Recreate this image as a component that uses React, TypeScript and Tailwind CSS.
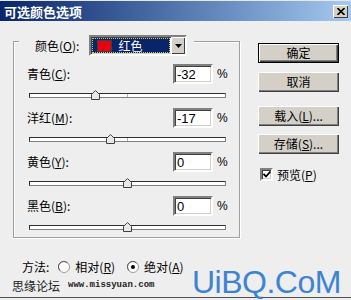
import React from 'react';

interface SliderRowProps {
  label: string;
  accel: string;
  value: number;
}

const sunken =
  'border-2 border-t-[#808080] border-l-[#808080] border-b-white border-r-white shadow-[inset_1px_1px_0_#404040,inset_-1px_-1px_0_#d4d0c8]';

const Label = ({ label, accel }: { label: string; accel: string }) => (
  <span>
    {label}(<span className="underline">{accel}</span>):
  </span>
);

const SliderRow = ({ label, accel, value }: SliderRowProps) => {
  const thumbLeft = 15 + (197 * (value + 100)) / 200 - 4.5;
  return (
    <div>
      <div className="flex items-center h-[20px] pl-[13px] pr-[13px]">
        <div className="flex-1">
          <Label label={label} accel={accel} />
        </div>
        <div
          className={`w-[40px] h-[20px] bg-white flex items-center pl-[2px] text-[13px] font-['Liberation_Sans',sans-serif] ${sunken}`}
        >
          {value}
        </div>
        <span className="ml-[4px] w-[9px] font-['Liberation_Sans',sans-serif] text-[12px]">%</span>
      </div>
      <div className="relative h-[24px] pt-[9px]">
        <div className="ml-[15px] w-[197px] h-[5px] relative bg-white border border-t-[#303030] border-l-[#303030] border-b-[#808080] border-r-[#808080]">
          <div className="absolute left-[97px] top-0 bottom-0 w-px bg-[#b0b0b0]" />
        </div>
        <svg
          className="absolute top-[6px]"
          style={{ left: thumbLeft }}
          width="9"
          height="10"
          viewBox="0 0 9 10"
        >
          <path d="M4.5 0.5 L8.5 4.5 V9.5 H0.5 V4.5 Z" fill="#e8e8e8" stroke="#404040" />
        </svg>
      </div>
    </div>
  );
};

const Button = ({ children, isDefault }: { children: React.ReactNode; isDefault?: boolean }) => (
  <div
    className={`w-[81px] h-[20px] bg-[#d4d0c8] flex items-center justify-center text-[12px] ${
      isDefault
        ? 'border border-black shadow-[inset_1px_1px_0_#fff,inset_-1px_-1px_0_#404040,inset_-2px_-2px_0_#808080]'
        : 'shadow-[inset_1px_1px_0_#fff,inset_-1px_-1px_0_#404040,inset_-2px_-2px_0_#808080]'
    }`}
  >
    {children}
  </div>
);

const Radio = ({ checked }: { checked?: boolean }) => (
  <svg width="12" height="12" viewBox="0 0 12 12">
    <circle cx="6" cy="6" r="5.5" fill="#fff" stroke="#9a9a9a" />
    <path d="M2 9.5 A5 5 0 0 1 9.5 2" fill="none" stroke="#555" />
    {checked && <circle cx="6" cy="6" r="2" fill="#000" />}
  </svg>
);

export default function App() {
  return (
    <div className="relative w-[351px] h-[300px] overflow-hidden bg-[#eeeeee] text-black text-[12px] leading-none font-['Noto_Sans_CJK_SC',sans-serif] flex flex-col">
      {/* title bar */}
      <div className="h-[21px] shrink-0 flex items-center justify-between pl-[4px] pr-[3px] bg-linear-to-r from-[#0a246a] to-[#a6caf0] border-t border-[#e8e8e8]">
        <span className="text-white font-bold text-[13px]">可选颜色选项</span>
        <div className="w-[15px] h-[13px] bg-[#d4d0c8] flex items-center justify-center shadow-[inset_1px_1px_0_#fff,inset_-1px_-1px_0_#404040]">
          <svg width="8" height="7" viewBox="0 0 8 7">
            <path d="M0.5 0 L7.5 7 M7.5 0 L0.5 7" stroke="#000" strokeWidth="1.6" />
          </svg>
        </div>
      </div>

      {/* body */}
      <div className="flex h-[217px] shrink-0">
        <div className="mt-[20px] ml-[13px] w-[227px] h-[197px] border border-[#a0a0a0] shadow-[inset_1px_1px_0_#fff,1px_1px_0_#fff]">
          <div className="-mt-[7px] ml-[5px] w-fit h-[21px] bg-[#eeeeee] pl-[16px] pr-[7px] flex items-center">
            <Label label="颜色" accel="O" />
            <div className={`ml-[10px] w-[98px] h-[21px] bg-white flex ${sunken}`}>
              <div className="flex-1 m-[1px] bg-[#0a246a] outline-1 outline-dotted outline-[#c8c864] -outline-offset-1 flex items-center pl-[5px]">
                <div className="w-[15px] h-[12px] bg-[#e60012] border border-[#404040]" />
                <span className="ml-[6px] text-white">红色</span>
              </div>
              <div className="w-[14px] bg-[#d4d0c8] flex items-center justify-center shadow-[inset_1px_1px_0_#fff,inset_-1px_-1px_0_#404040]">
                <svg width="7" height="4" viewBox="0 0 7 4">
                  <path d="M0 0 H7 L3.5 4 Z" fill="#000" />
                </svg>
              </div>
            </div>
          </div>
          <div className="mt-[8px]">
            <SliderRow label="青色" accel="C" value={-32} />
            <SliderRow label="洋红" accel="M" value={-17} />
            <SliderRow label="黄色" accel="Y" value={0} />
            <SliderRow label="黑色" accel="B" value={0} />
          </div>
        </div>

        <div className="ml-[18px] mt-[22px] flex flex-col">
          <Button isDefault>确定</Button>
          <div className="mt-[9px]">
            <Button>取消</Button>
          </div>
          <div className="mt-[14px]">
            <Button>
              载入(<span className="underline">L</span>)...
            </Button>
          </div>
          <div className="mt-[8px]">
            <Button>
              存储(<span className="underline">S</span>)...
            </Button>
          </div>
          <div className="mt-[14px] ml-[2px] flex items-center">
            <div className={`w-[13px] h-[13px] bg-white flex items-center justify-center ${sunken}`}>
              <svg width="8" height="7" viewBox="0 0 8 7">
                <path d="M0.5 3 L3 5.5 L7.5 0.5" fill="none" stroke="#000" strokeWidth="1.8" />
              </svg>
            </div>
            <span className="ml-[4px]">
              预览(<span className="underline">P</span>)
            </span>
          </div>
        </div>
      </div>

      {/* method */}
      <div className="mt-[21px] h-[16px] shrink-0 flex items-center pl-[22px]">
        <span>方法:</span>
        <span className="ml-[9px] flex">
          <Radio />
        </span>
        <span className="ml-[5px]">
          相对(<span className="underline">R</span>)
        </span>
        <span className="ml-[12px] flex">
          <Radio checked />
        </span>
        <span className="ml-[5px]">
          绝对(<span className="underline">A</span>)
        </span>
      </div>

      {/* watermark */}
      <div className="h-[21px] shrink-0 flex items-center pl-[12px] text-[#222]">
        <span>思缘论坛</span>
        <span className="ml-[8px] text-[9px] font-bold font-['Liberation_Mono',monospace]">www.missyuan.com</span>
      </div>
      <div className="mt-[1px] h-[1px] shrink-0 bg-[#505050]" />

      <div className="absolute left-[192px] top-[266px] text-[32px] leading-none tracking-[-0.5px] text-[#3c84d2] font-['Liberation_Sans',sans-serif]">
        UiBQ.CoM
      </div>
    </div>
  );
}
